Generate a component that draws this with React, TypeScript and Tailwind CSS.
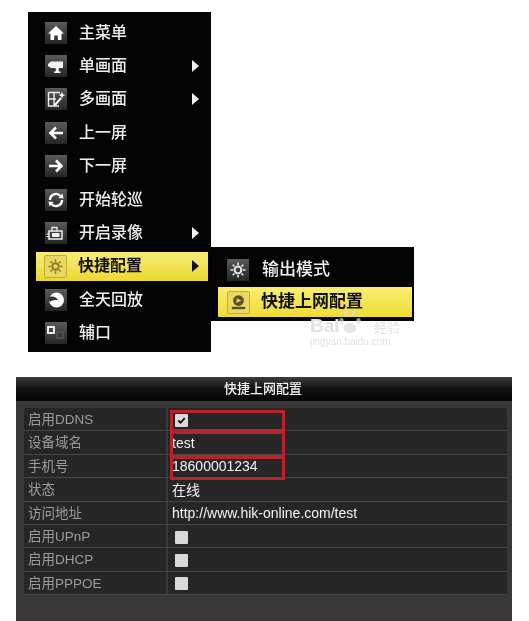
const cjk = "font-['Liberation_Sans','Noto_Sans_CJK_SC',sans-serif]"

const HomeIcon = () => (
   <svg viewBox="0 0 22 22" className="h-full w-full">
      <path d="M11 4 L19 11.5 H16.5 V18 H12.8 V13.5 H9.2 V18 H5.5 V11.5 H3 Z" fill="#fff" />
   </svg>
)

const CameraIcon = () => (
   <svg viewBox="0 0 22 22" className="h-full w-full">
      <path d="M3 9 L6 6.5 H18 V13 H14 C13.5 14.5 13.5 15.5 14 16.5 H15.5 V18 H9 V16.5 H10.5 C11 15.5 11 14.5 10.5 13 H6 L3 11 Z" fill="#f2f2f2" />
   </svg>
)

const MultiIcon = () => (
   <svg viewBox="0 0 22 22" className="h-full w-full">
      <path d="M3.5 4.5 H15 M3.5 4.5 V18 H14 M3.5 11 H11 M9 4.5 V18" stroke="#eee" strokeWidth="1.4" fill="none" />
      <path d="M10 17 L16 10" stroke="#fff" strokeWidth="2" />
      <path d="M17 4 L18 6.5 L20.5 7 L18 8 L17 10.5 L16 8 L13.5 7 L16 6 Z" fill="#fff" />
   </svg>
)

const LeftIcon = () => (
   <svg viewBox="0 0 22 22" className="h-full w-full">
      <path d="M18 11 H6 M11 5.5 L5.5 11 L11 16.5" stroke="#fff" strokeWidth="2.6" fill="none" />
   </svg>
)

const RightIcon = () => (
   <svg viewBox="0 0 22 22" className="h-full w-full">
      <path d="M4 11 H16 M11 5.5 L16.5 11 L11 16.5" stroke="#fff" strokeWidth="2.6" fill="none" />
   </svg>
)

const CycleIcon = () => (
   <svg viewBox="0 0 22 22" className="h-full w-full">
      <path d="M5 11 A6 6 0 0 1 15.5 7" stroke="#fff" strokeWidth="2.4" fill="none" />
      <path d="M17 11 A6 6 0 0 1 6.5 15" stroke="#fff" strokeWidth="2.4" fill="none" />
      <path d="M13.5 9 L18.5 9.5 L17.5 4.5 Z M8.5 13 L3.5 12.5 L4.5 17.5 Z" fill="#fff" />
   </svg>
)

const RecordIcon = () => (
   <svg viewBox="0 0 22 22" className="h-full w-full">
      <path d="M4 9 H17 V17 H4 Z" fill="none" stroke="#eee" strokeWidth="1.5" />
      <path d="M7 11 H14.5 V15 H7 Z" fill="#eee" />
      <path d="M7 9 V5.5 H12 V9" stroke="#eee" strokeWidth="1.3" fill="none" />
      <path d="M1.5 12 H4 M1.5 14.5 H4" stroke="#eee" strokeWidth="1.2" />
   </svg>
)

const GearIcon = ({ color }: { color: string }) => (
   <svg viewBox="0 0 22 22" className="h-full w-full">
      <circle cx="11" cy="11" r="3.4" fill="none" stroke={color} strokeWidth="2" />
      <path
         d="M11 3.5 V6 M11 16 V18.5 M3.5 11 H6 M16 11 H18.5 M5.7 5.7 L7.5 7.5 M14.5 14.5 L16.3 16.3 M16.3 5.7 L14.5 7.5 M7.5 14.5 L5.7 16.3"
         stroke={color}
         strokeWidth="1.6"
      />
   </svg>
)

const PlaybackIcon = () => (
   <svg viewBox="0 0 22 22" className="h-full w-full">
      <circle cx="11.5" cy="11" r="7.5" fill="#fff" />
      <path d="M3 9 C7 6 11 8 13 11 C10 11 7 11 5 13 Z" fill="#333" />
   </svg>
)

const AuxIcon = () => (
   <svg viewBox="0 0 22 22" className="h-full w-full">
      <rect x="3" y="5" width="6" height="6" fill="none" stroke="#fff" strokeWidth="1.8" />
      <rect x="12" y="10" width="6" height="6" fill="none" stroke="#555" strokeWidth="1.4" />
   </svg>
)

const NetIcon = () => (
   <svg viewBox="0 0 22 22" className="h-full w-full">
      <circle cx="11" cy="9" r="5.6" fill="#5a5020" />
      <path d="M9 6.5 L14 9 L9 11.5 Z" fill="#e9d964" />
      <path d="M4 15.5 H18 V18 H4 Z" fill="#5a5020" />
   </svg>
)

const PawIcon = () => (
   <svg viewBox="0 0 24 28" className="absolute left-[338px] top-[307px] h-[28px] w-[24px] opacity-70">
      <ellipse cx="12" cy="21" rx="6.5" ry="5" fill="#dcdcdc" />
      <ellipse cx="3.5" cy="14" rx="2.2" ry="3" fill="#dcdcdc" />
      <ellipse cx="20.5" cy="14" rx="2.2" ry="3" fill="#dcdcdc" />
      <ellipse cx="8" cy="6" rx="2.2" ry="3" fill="#dcdcdc" />
      <ellipse cx="16" cy="6" rx="2.2" ry="3" fill="#dcdcdc" />
   </svg>
)

const Tile = ({ children }: { children: React.ReactNode }) => (
   <div className="h-[22px] w-[22px] shrink-0 bg-gradient-to-b from-[#5a5a5a] to-[#262626]">{children}</div>
)

const LitTile = ({ children }: { children: React.ReactNode }) => (
   <div className="h-[23px] w-[23px] shrink-0 rounded-[2px] border border-[#c4ae2c] bg-[#e9d964]">{children}</div>
)

const menuItems = [
   { label: '主菜单', icon: <HomeIcon />, sub: false },
   { label: '单画面', icon: <CameraIcon />, sub: true },
   { label: '多画面', icon: <MultiIcon />, sub: true },
   { label: '上一屏', icon: <LeftIcon />, sub: false },
   { label: '下一屏', icon: <RightIcon />, sub: false },
   { label: '开始轮巡', icon: <CycleIcon />, sub: false },
   { label: '开启录像', icon: <RecordIcon />, sub: true },
   { label: '快捷配置', icon: <GearIcon color="#8a7a20" />, sub: true, active: true },
   { label: '全天回放', icon: <PlaybackIcon />, sub: false },
   { label: '辅口', icon: <AuxIcon />, sub: false },
]

const Arrow = ({ dark }: { dark?: boolean }) => (
   <svg viewBox="0 0 7 12" className="ml-auto h-[12px] w-[7px]">
      <path d="M0 0 L7 6 L0 12 Z" fill={dark ? '#111' : '#f2f2f2'} />
   </svg>
)

const Check = ({ checked }: { checked?: boolean }) => (
   <div className="flex h-[13px] w-[13px] items-center justify-center rounded-[1px] bg-[#d9d9d9]">
      {checked && (
         <svg viewBox="0 0 12 12" className="h-[11px] w-[11px]">
            <path d="M2.5 6 L5 8.5 L9.5 3.5" stroke="#111" strokeWidth="2" fill="none" />
         </svg>
      )}
   </div>
)

const rows: { label: string; value?: string; check?: boolean; checked?: boolean }[] = [
   { label: '启用DDNS', check: true, checked: true },
   { label: '设备域名', value: 'test' },
   { label: '手机号', value: '18600001234' },
   { label: '状态', value: '在线' },
   { label: '访问地址', value: 'http://www.hik-online.com/test' },
   { label: '启用UPnP', check: true },
   { label: '启用DHCP', check: true },
   { label: '启用PPPOE', check: true },
]

const App = () => {
   return (
      <div className={`flex h-[621px] w-[529px] flex-col overflow-hidden bg-white blur-[0.4px] ${cjk}`}>
         <div className="relative flex pl-[28px] pt-[12px]">
            <div className="h-[340px] w-[183px] bg-[#040404] pt-[4px]">
               {menuItems.map((item) => (
                  <div key={item.label} className="flex h-[33.4px] items-center">
                     <div
                        className={
                           item.active
                              ? 'ml-[8px] mr-[3px] flex h-[29px] flex-1 items-center gap-[11px] bg-gradient-to-b from-[#f7ec74] to-[#ecd92c] pl-[8px] pr-[9px] text-[16px] font-bold text-[#111]'
                              : 'ml-[8px] mr-[3px] flex h-[29px] flex-1 items-center gap-[12px] pl-[9px] pr-[9px] text-[16px] font-medium text-[#eeeeee]'
                        }
                     >
                        {item.active ? <LitTile>{item.icon}</LitTile> : <Tile>{item.icon}</Tile>}
                        <span>{item.label}</span>
                        {item.sub && <Arrow dark={item.active} />}
                     </div>
                  </div>
               ))}
            </div>
            <div className="mt-[235px] h-[74px] w-[203px] self-start bg-[#040404] pl-[7px] pr-[2px] pt-[8px]">
               <div className="flex h-[30px] items-center gap-[13px] pl-[9px] text-[17px] font-medium text-[#eeeeee]">
                  <Tile>
                     <GearIcon color="#eeeeee" />
                  </Tile>
                  <span>输出模式</span>
               </div>
               <div className="mt-[2px] flex h-[30px] items-center gap-[11px] bg-gradient-to-b from-[#f9ee70] to-[#efdc2e] pl-[9px] text-[17px] font-bold text-[#111]">
                  <LitTile>
                     <NetIcon />
                  </LitTile>
                  <span>快捷上网配置</span>
               </div>
            </div>
            <PawIcon />
            <div className="absolute left-[310px] top-[316px] w-[90px] text-[#e2e2e2]">
               <div className="flex items-end justify-between text-[19px] font-bold leading-[20px]">
                  <span>Bai</span>
                  <span className="text-[13px] font-normal leading-[16px]">经验</span>
               </div>
               <div className="text-[10px] leading-[12px]">jingyan.baidu.com</div>
            </div>
         </div>

         <div className="ml-[16px] mt-[25px] flex w-[496px] flex-1 flex-col bg-[#383637]">
            <div className="flex h-[24px] items-center justify-center bg-gradient-to-b from-[#3d3d3d] via-[#111111] to-[#050505] pr-[2px] text-[13px] font-medium text-[#f2f2f2]">
               快捷上网配置
            </div>
            <div className="relative ml-[8px] mt-[7px] h-[187px] w-[483px] rounded-[3px] bg-[#262626]">
               {rows.map((row) => (
                  <div key={row.label} className="flex h-[23.4px] items-center border-b border-[#464646] last:border-b-0">
                     <div className="flex h-full w-[144px] items-center border-r-2 border-[#3a3a3a] pl-[4px] pt-[2px] text-[13.5px] text-[#9c9c9c]">
                        {row.label}
                     </div>
                     <div className="flex items-center pl-[4px] pt-[2px] text-[14px] text-[#f2f2f2]">
                        {row.check ? (
                           <div className="pl-[3px]">
                              <Check checked={row.checked} />
                           </div>
                        ) : (
                           row.value
                        )}
                     </div>
                  </div>
               ))}
               <div className="absolute left-[146px] top-[2px] h-[22px] w-[115px] border-[3px] border-[#b5242c]" />
               <div className="absolute left-[146px] top-[23px] h-[27px] w-[115px] border-[3px] border-[#b5242c]" />
               <div className="absolute left-[146px] top-[48px] h-[24px] w-[115px] border-[3px] border-[#b5242c]" />
            </div>
         </div>
      </div>
   )
}

export default App
